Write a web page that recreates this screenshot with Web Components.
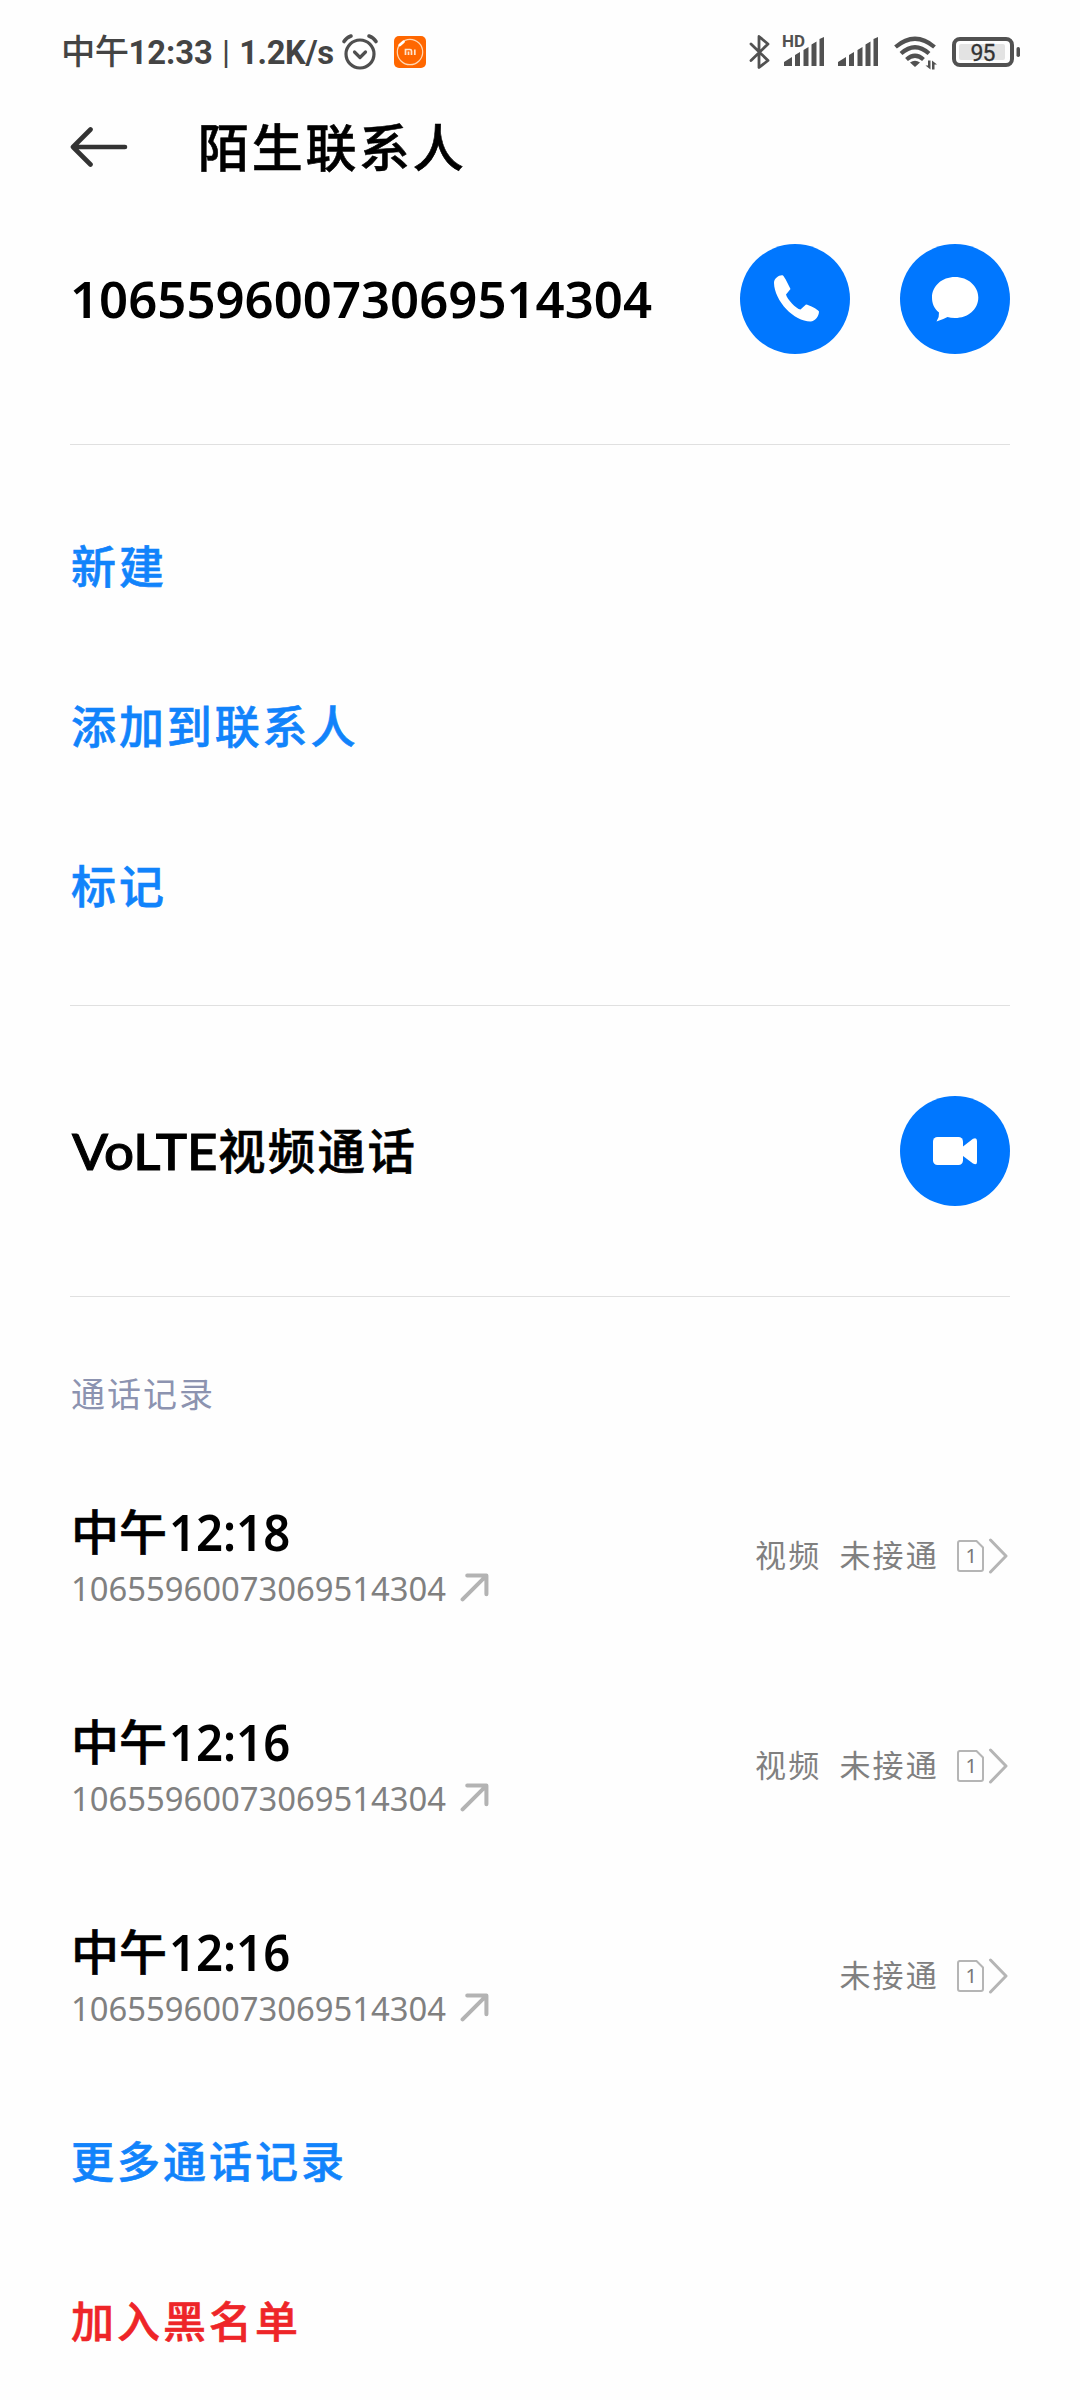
<!DOCTYPE html>
<html lang="zh-CN">
<head>
<meta charset="utf-8">
<title>陌生联系人</title>
<style>
html,body{margin:0;background:#fefefe}
body{width:1080px;height:2400px;overflow:hidden;font-family:"Noto Sans","Noto Sans CJK SC",sans-serif;color:#000}
</style>
</head>
<body>
<contact-page></contact-page>
<script>
const define=(name,html,init)=>customElements.define(name,class extends HTMLElement{
  connectedCallback(){
    if(this.shadowRoot)return;
    const t=document.createElement('template');
    t.innerHTML=html;
    this.attachShadow({mode:'open'}).append(t.content.cloneNode(true));
    if(init)init(this,this.shadowRoot);
  }
});

/* Text squeezed or stretched horizontally to the width given in "w". */
define('fit-text',`<style>:host{display:block;white-space:nowrap;flex:none}span{display:inline-block;transform-origin:0 50%}</style><span><slot></slot></span>`,
(el,root)=>{
  const w=+el.getAttribute('w'),s=root.querySelector('span');
  el.style.width=w+'px';
  s.style.transform='scaleX('+w/s.offsetWidth+')';
});

define('status-bar',`<style>
:host{display:flex;justify-content:space-between;align-items:center;height:104px;padding:0 60px 0 61px;box-sizing:border-box;color:#444}
div{display:flex;align-items:center}
svg{display:block;flex:none}
.t{font:700 33px/40px Roboto,"Noto Sans CJK SC",sans-serif;white-space:pre}
.c{font-weight:500;font-size:34.5px;letter-spacing:-.5px}
.b{font-weight:400;margin:0 1px}
.r{letter-spacing:-.4px}
svg text{font-family:Roboto,sans-serif}
</style>
<div><fit-text class="t" w="273"><span class="c">中午</span>12:33<span class="b"> | </span><span class="r">1.2K/s</span></fit-text>
<svg style="margin-left:7px" width="38" height="40" viewBox="0 0 38 40" fill="none" stroke="#4f4f4f" stroke-width="3.2" stroke-linecap="round" stroke-linejoin="round"><circle cx="19" cy="22" r="14"/><path d="M13.500 20l5.500 5.500 5.500-5.500"/><path d="M3 9.500Q5.500 5.500 10 4M28 4Q32.500 5.500 35 9.500" stroke-width="3.600"/></svg>
<svg style="margin-left:15px" width="32" height="32" viewBox="0 0 32 32"><rect width="32" height="32" rx="5" fill="#ff6700"/><circle cx="16" cy="16" r="12.700" fill="none" stroke="#ffd9b5" stroke-width="1.200"/><path d="M5.500 9.500L10 5.500" stroke="#ff6700" stroke-width="6"/><path d="M5.800 9L9.500 5.700" stroke="#fff" stroke-width="2.800" stroke-linecap="round"/><path d="M11.500 19v-5.500h4.500q1.500 0 1.500 1.500v4M14.500 15.500V19M20.800 13.500V19" fill="none" stroke="#ffe3cc" stroke-width="1.700"/></svg></div>
<svg width="274" height="40" viewBox="746 32 274 40" fill="#515151">
<path d="M751 44L768 60.500L759 67.500V36.500L768 44L751 60.500" fill="none" stroke="#515151" stroke-width="2.800" stroke-linejoin="round" stroke-linecap="round"/>
<text x="782" y="47" font-size="16.500" font-weight="700" textLength="23" lengthAdjust="spacingAndGlyphs">HD</text>
<path d="M784 62l8-5v9h-8zM795 55l5-3v14h-5zM803.500 50l5-3v19h-5zM811.500 44.500l5-3V66h-5zM819.500 39l4.500-2V66h-4.500z"/>
<path d="M838 62l8-5v9h-8zM849 55l5-3v14h-5zM857.500 50l5-3v19h-5zM865.500 44.500l5-3V66h-5zM873.500 39l4.500-2V66h-4.500z"/>
<g fill="none" stroke="#515151" stroke-width="4.200"><path d="M895.500 47Q915 30.500 934.500 47M901 53.500Q915 41 929 53.500M906.500 59.500Q915 52 923.500 59.500"/></g>
<path d="M910 62.500Q915 59 920 62.500L915 67z"/>
<path d="M930.500 60.500v9l-5-4h2.500V60.500zM932 69.500v-9l5 4h-2.500v5z"/>
<rect x="954" y="39" width="58" height="26" rx="6" fill="none" stroke="#515151" stroke-width="4"/>
<rect x="959" y="44" width="46" height="16" rx="2" fill="#e3e3e3"/>
<rect x="1016.500" y="47" width="3.500" height="10" rx="1.700"/>
<text x="970.500" y="60.700" font-size="23" font-weight="400" fill="#333" stroke="#333" stroke-width=".3" textLength="25">95</text>
</svg>`);

define('title-bar',`<style>
:host{display:flex;align-items:center;height:86px;padding-left:70px}
svg{display:block;margin-right:70px}
h1{margin:-5px 0 0;font:500 51px/86px "Noto Sans CJK SC",sans-serif;letter-spacing:2.700px;-webkit-text-stroke:.6px}
</style>
<svg width="58" height="40" viewBox="0 0 58 40" fill="none" stroke="#333" stroke-width="4.600" stroke-linecap="round" stroke-linejoin="round"><path d="M20.500 2.500L3 20L20.500 37.500M3 20H55"/></svg>
<h1><slot></slot></h1>`);

const glyphs={
  call:'<path d="M34 39C34 34 40 30.500 43 31.500C45 33.500 48.500 41 50.500 45L46 50.500C47 55 56 65 60.500 65.500L66 60.500C69 61 77.500 65 79 67.500C79 72 75 77.500 70.500 77.500C54 77.500 34.500 57 34 39Z"/>',
  message:'<path d="M55 33C68 33 78.300 42 78.300 53.500C78.300 65.500 68 74 55 74Q50.500 74 47.500 73Q43 75.500 36.500 77.500Q39.500 73 39 68.500C34 64.500 32 59.500 32 53.500C32 42 42 33 55 33Z"/>',
  video:'<rect x="33" y="41" width="30" height="28" rx="4.500"/><path d="M63 50.500L73 42.800Q77 41 77 45V66Q77 69.500 73 67.500L63 60Z"/>'
};
define('round-action',`<style>:host{display:block;width:110px;height:110px;flex:none}svg{display:block}</style><svg width="110" height="110"><circle cx="55" cy="55" r="55" fill="#0077ff"/><g fill="#fff"></g></svg>`,
(el,root)=>{root.querySelector('g').innerHTML=glyphs[el.getAttribute('kind')]});

define('page-section',`<style>:host{display:block;box-sizing:border-box;margin:0 70px;border-bottom:1px solid #e0e0e0}</style><slot></slot>`);

define('main-row',`<style>
:host{display:flex;align-items:center;font-size:50px;line-height:110px;font-weight:600}
.l{display:flex;flex:1}
.a{display:flex;gap:50px}
</style><div class="l"><slot></slot></div><div class="a"><slot name="actions"></slot></div>`);

define('link-row',`<style>
:host{display:block;height:160px;box-sizing:border-box;padding-left:1px;font:500 45px/155px "Noto Sans CJK SC",sans-serif;letter-spacing:2.900px;color:#1183fb;-webkit-text-stroke:.6px}
:host([small]){font-size:43px;letter-spacing:3px;line-height:158px}
:host([danger]){color:#ee2528}
</style><slot></slot>`);

define('call-record',`<style>
:host{display:flex;justify-content:space-between;height:210px;padding-right:2px}
.main{padding-top:52px}
.time{display:flex;font:600 50px/60px "Noto Sans","Noto Sans CJK SC",sans-serif;white-space:nowrap;height:61px}
.time span{font:500 48px/60px "Noto Sans CJK SC",sans-serif;letter-spacing:0;margin:-3px 2px 0 1px;-webkit-text-stroke:.6px}
.num{display:flex;align-items:center;gap:14px;height:50px;padding-left:1px;font-size:32.700px;color:#808080}
.state{display:flex;align-items:center;height:60px;padding-top:76px;font:400 31px/60px "Noto Sans CJK SC",sans-serif;letter-spacing:2.200px;color:#808080;white-space:nowrap}
.state span{margin-top:-4px}
.state .k{margin-right:18px}
svg{display:block}
.num svg{margin-top:-1px}
.state svg{margin-top:-1px}
</style>
<div class="main"><div class="time"><span>中午</span><fit-text class="clock" w="121"></fit-text></div>
<div class="num"><fit-text w="375"></fit-text><svg width="29" height="29" viewBox="0 0 28 28" fill="none" stroke="#b3b3b3" stroke-width="3.900" stroke-linecap="round" stroke-linejoin="round"><path d="M7 2.500H25.500V20.500M25 3L2.500 25.500"/></svg></div></div>
<div class="state"><span class="k"></span><span>未接通</span>
<svg style="margin-left:17px" width="52" height="38" viewBox="0 0 52 38" fill="none" stroke="#b5b5b5" stroke-width="2"><path d="M3 4H20.500L27 10.500V32Q27 34 25 34H4Q2 34 2 32V6Q2 4 4 4"/><path d="M34.500 3L50 19L34.500 35" stroke-width="3" stroke-linecap="round" stroke-linejoin="round"/><text x="9.500" y="26" font-family="Noto Sans" font-size="20" fill="#777" stroke="none" letter-spacing="0">1</text></svg></div>`,
(el,root)=>{
  const fill=(sel,text)=>{
    const n=root.querySelector(sel),c=document.createElement('fit-text');
    c.setAttribute('w',n.getAttribute('w'));
    c.textContent=text;
    n.replaceWith(c);
  };
  fill('.clock',el.getAttribute('time'));
  fill('.num fit-text','10655960073069514304');
  const k=root.querySelector('.k');
  if(el.hasAttribute('video'))k.textContent='视频';else k.remove();
});

define('contact-page',`<style>
:host{display:flex;flex-direction:column;width:1080px;height:2400px;background:#fefefe}
.number{height:255px;padding-top:54px}
.links{height:561px;padding-top:42px}
.volte{height:291px;padding-top:90px}
.log{margin:0 70px}
h2{margin:0;height:153px;box-sizing:border-box;padding:66px 0 0 1px;font:400 34px/60px "Noto Sans CJK SC",sans-serif;letter-spacing:2px;color:#8c93b0}
.v{font-family:Lato,sans-serif;font-weight:500;-webkit-text-stroke:1px;padding-left:2px}
.cjk{font:500 47.500px/110px "Noto Sans CJK SC",sans-serif;letter-spacing:2.300px;margin-top:-2px;-webkit-text-stroke:.6px}
</style>
<status-bar></status-bar>
<title-bar>陌生联系人</title-bar>
<page-section class="number"><main-row><fit-text w="582">10655960073069514304</fit-text><round-action slot="actions" kind="call"></round-action><round-action slot="actions" kind="message"></round-action></main-row></page-section>
<page-section class="links"><link-row>新建</link-row><link-row>添加到联系人</link-row><link-row>标记</link-row></page-section>
<page-section class="volte"><main-row><fit-text class="v" w="146">VoLTE</fit-text><span class="cjk">视频通话</span><round-action slot="actions" kind="video"></round-action></main-row></page-section>
<div class="log"><h2>通话记录</h2>
<call-record time="12:18" video></call-record><call-record time="12:16" video></call-record><call-record time="12:16"></call-record>
<link-row small>更多通话记录</link-row><link-row small danger>加入黑名单</link-row></div>`);
</script>
</body>
</html>
